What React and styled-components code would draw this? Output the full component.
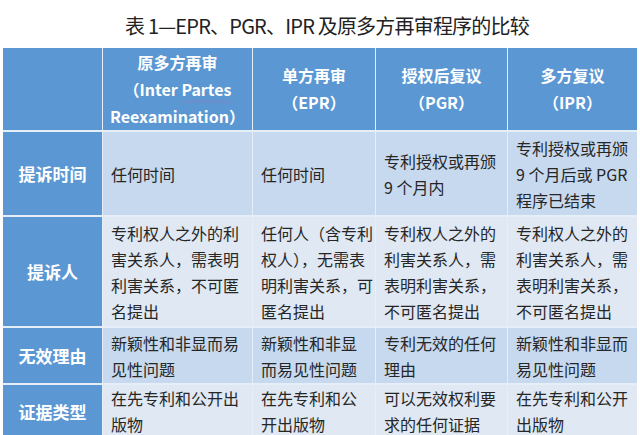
import styled, { createGlobalStyle } from "styled-components";

const GlobalStyle = createGlobalStyle`
  html, body {
    margin: 0;
    padding: 0;
    background: #ffffff;
    overflow: hidden;
  }
  body {
    font-family: "Noto Sans CJK SC", "Noto Sans", sans-serif;
  }
`;

const columns = [
  { head: ["原多方再审", "（Inter Partes", "Reexamination）"] },
  { head: ["单方再审", "（EPR）"] },
  { head: ["授权后复议", "（PGR）"] },
  { head: ["多方复议", "（IPR）"] },
];

const rows = [
  {
    label: "提诉时间",
    height: 83,
    shade: "dark",
    cells: [
      ["任何时间"],
      ["任何时间"],
      ["专利授权或再颁", "9 个月内"],
      ["专利授权或再颁", "9 个月后或 PGR", "程序已结束"],
    ],
  },
  {
    label: "提诉人",
    height: 109,
    shade: "light",
    cells: [
      ["专利权人之外的利", "害关系人，需表明", "利害关系，不可匿", "名提出"],
      ["任何人（含专利", "权人），无需表", "明利害关系，可", "匿名提出"],
      ["专利权人之外的", "利害关系人，需", "表明利害关系，", "不可匿名提出"],
      ["专利权人之外的", "利害关系人，需", "表明利害关系，", "不可匿名提出"],
    ],
  },
  {
    label: "无效理由",
    height: 55,
    shade: "dark",
    cells: [
      ["新颖性和非显而易", "见性问题"],
      ["新颖性和非显", "而易见性问题"],
      ["专利无效的任何", "理由"],
      ["新颖性和非显而", "易见性问题"],
    ],
  },
  {
    label: "证据类型",
    height: 52,
    shade: "light",
    cells: [
      ["在先专利和公开出", "版物"],
      ["在先专利和公", "开出版物"],
      ["可以无效权利要", "求的任何证据"],
      ["在先专利和公开", "出版物"],
    ],
  },
];

const App = () => {
  return (
    <>
      <GlobalStyle />
      <Page>
        <Title>表 1—EPR、PGR、IPR 及原多方再审程序的比较</Title>
        <Table>
          <HeadCell />
          {columns.map((c, i) => (
            <HeadCell key={i}>
              {c.head.map((line, j) => (
                <Line key={j}>
                  {line.includes("Partes") ? (
                    <>
                      （Inter <Wavy>Partes</Wavy>
                    </>
                  ) : (
                    line
                  )}
                </Line>
              ))}
            </HeadCell>
          ))}
          {rows.map((r, i) => (
            <Row key={i} $height={r.height}>
              <LabelCell>{r.label}</LabelCell>
              {r.cells.map((lines, j) => (
                <BodyCell key={j} $shade={r.shade}>
                  {lines.map((l, k) => (
                    <Line key={k}>{l}</Line>
                  ))}
                </BodyCell>
              ))}
            </Row>
          ))}
        </Table>
      </Page>
    </>
  );
};

export default App;

const Page = styled.div`
  width: 640px;
  height: 435px;
  overflow: hidden;
  padding: 0 3px;
  box-sizing: border-box;
`;

const Title = styled.h1`
  margin: 0;
  height: 48px;
  display: flex;
  align-items: center;
  justify-content: center;
  padding: 2px 0 0 14px;
  box-sizing: border-box;
  font-size: 20px;
  font-weight: 400;
  color: #222;
  letter-spacing: -0.8px;
`;

const Table = styled.div`
  display: grid;
  grid-template-columns: 99px 149px 122px 131px 129px;
  grid-template-rows: 82px;
  column-gap: 1px;
  row-gap: 2px;
  background: #e6eef7;
  width: 634px;
`;

const Row = styled.div`
  display: contents;
  & > * {
    height: ${(p) => p.$height}px;
  }
`;

const HeadCell = styled.div`
  background: #5b97d3;
  color: #ffffff;
  font-weight: 700;
  font-size: 16px;
  line-height: 27px;
  display: flex;
  flex-direction: column;
  align-items: center;
  justify-content: center;
  text-align: center;
`;

const LabelCell = styled.div`
  background: #5b97d3;
  color: #ffffff;
  font-weight: 700;
  font-size: 17px;
  display: flex;
  align-items: center;
  justify-content: center;
`;

const BodyCell = styled.div`
  background: ${(p) => (p.$shade === "dark" ? "#c6d9ee" : "#dfe8f3")};
  color: #262626;
  font-size: 16px;
  line-height: 26px;
  display: flex;
  flex-direction: column;
  justify-content: center;
  padding-left: 8px;
  white-space: nowrap;
  overflow: hidden;
`;

const Line = styled.span`
  display: block;
`;

const Wavy = styled.span`
  text-decoration: underline wavy #8a7fc0;
  text-decoration-thickness: 1px;
  text-underline-offset: 3px;
`;
